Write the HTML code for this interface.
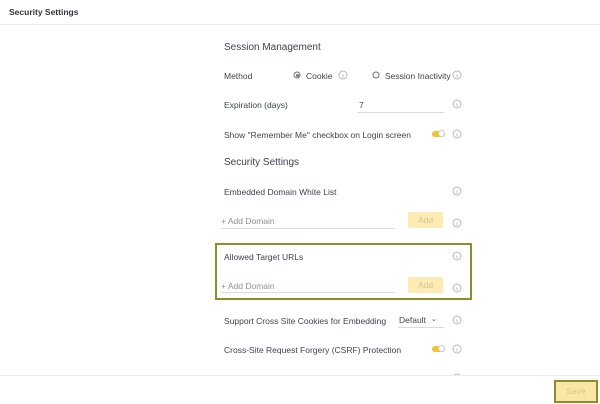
<!DOCTYPE html>
<html><head><meta charset="utf-8"><style>
*{margin:0;padding:0;box-sizing:border-box}
body{width:600px;height:404px;background:#fff;font-family:"Liberation Sans",sans-serif;color:#3d4450;position:relative;overflow:hidden}
.a{position:absolute;white-space:nowrap}
.t{font-size:8.5px;line-height:10px;transform:translateY(-4px)}
.h{font-size:10px;line-height:12px;transform:translateY(-5px)}
.i{position:absolute;width:9px;height:9px;border:1px solid #b5b9bf;border-radius:50%;transform:translate(-4.5px,-4.5px)}
.i:after{content:"";position:absolute;left:3px;top:3px;width:1px;height:3px;background:#b5b9bf}
.ul{position:absolute;height:1px;background:#d8dbe0}
.tg{position:absolute;width:13px;height:6px;border-radius:3px;background:#f2c230;transform:translateY(-3px)}
.tg:after{content:"";position:absolute;right:0;top:-1px;width:7px;height:7px;border-radius:50%;background:#fff;border:1px solid #ccc;box-sizing:border-box}
.btn{position:absolute;background:#fcebb2;color:#d6c48f;font-size:8.5px;text-align:center;line-height:16px;border-radius:1px}
.r{position:absolute;width:7px;height:7px;border:1px solid #6b7079;border-radius:50%;transform:translate(-3.5px,-3.5px)}
.ph{color:#8b9099}
</style></head><body>
<div class="a" style="left:0;top:0;width:600px;height:25px;border-bottom:1px solid #ececec"></div>
<div class="a" style="left:9px;top:12px;font-size:8.5px;font-weight:bold;transform:translateY(-5px);color:#2f3540">Security Settings</div>

<div class="a h" style="left:224px;top:47px">Session Management</div>
<div class="a t" style="left:224px;top:75px">Method</div>
<div class="r" style="left:297px;top:75px"></div><div class="a" style="left:295.5px;top:73.5px;width:3px;height:3px;border-radius:50%;background:#6b7079"></div>
<div class="a t" style="left:306px;top:75px">Cookie</div>
<div class="i" style="left:343px;top:75px"></div>
<div class="r" style="left:376px;top:75px"></div>
<div class="a t" style="left:385px;top:75px">Session Inactivity</div>
<div class="i" style="left:457px;top:75px"></div>

<div class="a t" style="left:224px;top:104px">Expiration (days)</div>
<div class="a t" style="left:359px;top:104px">7</div>
<div class="ul" style="left:357px;top:112px;width:87px"></div>
<div class="i" style="left:457px;top:104px"></div>

<div class="a t" style="left:224px;top:134px">Show "Remember Me" checkbox on Login screen</div>
<div class="tg" style="left:432px;top:134px"></div>
<div class="i" style="left:457px;top:134px"></div>

<div class="a h" style="left:224px;top:162px">Security Settings</div>
<div class="a t" style="left:224px;top:191px">Embedded Domain White List</div>
<div class="i" style="left:457px;top:191px"></div>
<div class="a t ph" style="left:221px;top:220px">+ Add Domain</div>
<div class="ul" style="left:221px;top:228px;width:174px"></div>
<div class="btn" style="left:408px;top:212px;width:35px;height:16px">Add</div>
<div class="i" style="left:457px;top:223px"></div>

<div class="a" style="left:215px;top:243px;width:257px;height:57px;border:2px solid #8d8d2b"></div>
<div class="a t" style="left:224px;top:256px">Allowed Target URLs</div>
<div class="i" style="left:457px;top:256px"></div>
<div class="a t ph" style="left:221px;top:285px">+ Add Domain</div>
<div class="ul" style="left:221px;top:292px;width:174px"></div>
<div class="btn" style="left:408px;top:277px;width:35px;height:16px">Add</div>
<div class="i" style="left:457px;top:288px"></div>

<div class="a t" style="left:224px;top:320px">Support Cross Site Cookies for Embedding</div>
<div class="a t" style="left:399px;top:319px">Default</div>
<div class="a t" style="left:431px;top:319px;font-size:7px">&#8964;</div>
<div class="ul" style="left:398px;top:327px;width:46px"></div>
<div class="i" style="left:457px;top:320px"></div>

<div class="a t" style="left:224px;top:349px">Cross-Site Request Forgery (CSRF) Protection</div>
<div class="tg" style="left:432px;top:349px"></div>
<div class="i" style="left:457px;top:349px"></div>
<div class="i" style="left:457px;top:378px"></div>

<div class="a" style="left:0;top:375px;width:600px;height:29px;background:#fff;border-top:1px solid #ececec"></div>
<div class="a" style="left:554px;top:380px;width:44px;height:23px;border:2px solid #8d8d2b;background:#fbe6a6;color:#d8c58f;font-size:8.5px;text-align:center;line-height:19px">Save</div>
</body></html>
